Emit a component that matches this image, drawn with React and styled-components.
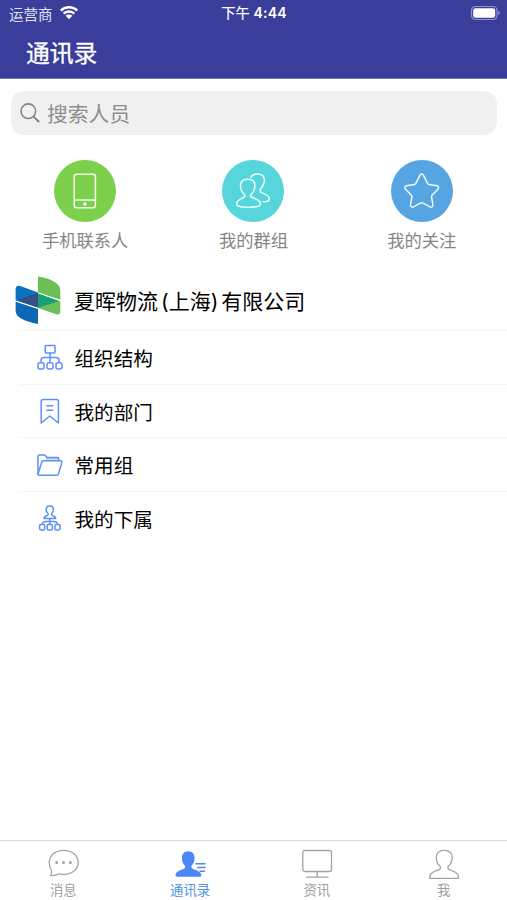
import styled, { createGlobalStyle } from 'styled-components';

const GlobalStyle = createGlobalStyle`
    * {
        box-sizing: border-box;
    }
    body {
        margin: 0;
        background: #fff;
        font-family: "Inter", "Noto Sans CJK SC", sans-serif;
    }
`;

const WifiIcon = () => (
    <svg width="20" height="16" viewBox="0 0 20 16" fill="#fff">
        <path d="M10 1C6.400 1 3.200 2.400.9 4.700l1.700 1.800A10.500 10.500 0 0 1 10 3.500c2.900 0 5.500 1.100 7.400 3l1.700-1.800A13 13 0 0 0 10 1z" />
        <path d="M10 5.200c-2.400 0-4.600.9-6.200 2.500l1.700 1.800A6.400 6.400 0 0 1 10 7.700c1.800 0 3.300.7 4.500 1.800l1.700-1.800A8.800 8.800 0 0 0 10 5.200z" />
        <path d="M10 9.400c-1.300 0-2.500.5-3.400 1.300L10 14.300l3.400-3.600A5 5 0 0 0 10 9.400z" />
    </svg>
);

const BatteryIcon = () => (
    <svg width="31" height="16" viewBox="0 0 31 16">
        <rect x="1.500" y="1.500" width="25.500" height="13" rx="4" fill="none" stroke="#8f92cf" strokeWidth="1.200" />
        <rect x="3.200" y="3.200" width="22" height="9.600" rx="2.300" fill="#fff" />
        <path d="M28.400 5.800c1.800.6 1.800 3.800 0 4.400z" fill="#8f92cf" />
    </svg>
);

const SearchIcon = () => (
    <svg width="20" height="20" viewBox="0 0 20 20" fill="none" stroke="#858585" strokeLinecap="round">
        <circle cx="8.300" cy="8.200" r="7.300" strokeWidth="1.600" />
        <path d="M13.600 13.600l5 4.900" strokeWidth="2" />
    </svg>
);

const PhoneIcon = () => (
    <svg width="62" height="62" viewBox="0 0 62 62" fill="none" stroke="#f4ffe9" strokeWidth="1.500">
        <rect x="20.200" y="14.200" width="21.200" height="33.600" rx="2.500" />
        <path d="M20.200 40h21.200" />
        <circle cx="30.900" cy="44" r="1.700" fill="#fff" stroke="none" />
    </svg>
);

const GroupIcon = () => (
    <svg width="62" height="62" viewBox="0 0 62 62" fill="none" stroke="#e9ffff" strokeWidth="1.500" strokeLinejoin="round" strokeLinecap="round">
        <path d="M22.400 34.500c-2.600-2.500-3.900-5.300-3.900-8.800 0-4.200 2.900-6.500 7.200-6.500s7.200 2.300 7.200 6.500c0 3.500-1.300 6.300-3.900 8.800-1 1.300-.5 2.300 1.200 3 4.900 1.700 8.400 3.200 8.400 6.500 0 1.700-3.500 3.300-12.600 3.300S14.500 45.700 14.500 44c0-3.300 3.400-4.800 6.700-6.500 1.700-.7 2.200-1.700 1.200-3z" />
        <path d="M28.800 17.300c1.300-2.200 3.600-3.300 6.500-3.300 4.400 0 7.100 2.400 7.100 6.300 0 3.700-1.500 6-3.700 8.700-1.200 1.700-.6 3 1.400 3.900 4.500 1.700 7.300 3.300 7.300 6 0 1.900-2 2.900-6.400 2.900" />
    </svg>
);

const StarIcon = () => (
    <svg width="62" height="62" viewBox="0 0 62 62" fill="none" stroke="#f2faff" strokeWidth="1.500" strokeLinejoin="round">
        <path d="M28.900 15.300c.8-1.600 2.800-1.600 3.600 0l4.200 8.300c.3.500.7.800 1.300.9l7.700 1.200c1.800.3 2.400 2.200 1.200 3.500l-5.900 6c-.4.500-.6 1-.5 1.600l1.400 7.900c.3 1.800-1.300 3-2.900 2.200l-7.500-4c-.5-.3-1.100-.3-1.600 0l-7.500 4c-1.600.8-3.200-.4-2.900-2.200l1.400-7.900c.1-.6-.1-1.100-.5-1.600l-5.900-6c-1.200-1.300-.6-3.200 1.200-3.500l7.700-1.200c.6-.1 1-.4 1.300-.9z" />
    </svg>
);

const CompanyLogo = () => (
    <svg width="46" height="50" viewBox="0 0 46 50">
        <path d="M23 1.500C34 3.200 45.300 7.800 45.300 15v9.800L23 17.200z" fill="#6abf58" />
        <path d="M23 18.600l22.300 7.800v9.800c0 2.800-2 3.800-4.800 2.900L23 33z" fill="#6abf58" />
        <path d="M.6 14.500c0-3.200 1.800-4.300 4.700-3.400L23 17.500v14.900L.6 25.200z" fill="#0b72bd" />
        <path d="M.6 26.800L23 34v15C10 46.200.6 43 .6 35.500z" fill="#0b68b4" />
        <path d="M1.500 25.400L23 18v14.400z" fill="#354f84" />
        <path d="M23 18.600l21 7.500L23 33z" fill="#199f77" />
    </svg>
);

const OrgIcon = () => (
    <LineIcon>
        <rect x="8.200" y="1.500" width="9.800" height="7.500" rx="1" />
        <path d="M13 9v9.300M4 19v-2.500c0-2 1.300-3 3-3h12c1.800 0 3.100 1 3.100 3V19" />
        <rect x="1" y="18.700" width="6" height="6.300" rx="2" />
        <rect x="10" y="18.700" width="6" height="6.300" rx="2" />
        <rect x="19" y="18.700" width="6" height="6.300" rx="2" />
    </LineIcon>
);

const BookmarkIcon = () => (
    <LineIcon>
        <path d="M4.200 25V3.500c0-1.200.8-2 2-2h13.200c1.200 0 2 .8 2 2V25l-8.600-7z" />
        <path d="M9.300 7.800h7M9.300 12.200h7" />
    </LineIcon>
);

const FolderIcon = () => (
    <LineIcon>
        <path d="M1 22V4.500C1 3.600 1.500 3 2.500 3h5.200l2.200 2.500h10.200c1 0 1.700.7 1.700 1.700V9" />
        <path d="M1 22L4.800 10c.3-.9.800-1.200 1.600-1.200h17.300c1 0 1.400.7 1.200 1.600L21.500 21.800c-.2.900-.8 1.400-1.700 1.400H2.200c-.9 0-1.400-.5-1.200-1.200z" />
        <path d="M9 6.700h12.300" strokeWidth="2" opacity=".45" />
    </LineIcon>
);

const SubordinateIcon = () => (
    <LineIcon>
        <path d="M11 8.500C9.500 7.300 9.200 6.200 9.200 4.700c0-2.400 1.300-3.700 3.600-3.700s3.600 1.300 3.600 3.700c0 1.500-.3 2.600-1.800 3.800-.5 1.300.2 2 1.500 2.500 1.600.5 2.600 1.200 2.600 2.600H6.900c0-1.400 1-2.100 2.600-2.600 1.300-.5 2-1.200 1.500-2.500z" />
        <path d="M12.800 13.600v5.800M5 19.600c.2-2 1.700-3.100 4.200-3.100h7.400c2.300 0 3.800 1.100 4 3.100" />
        <rect x="2.600" y="19.600" width="5.200" height="5.400" rx="1.500" />
        <rect x="10.200" y="19.600" width="5.200" height="5.400" rx="1.500" />
        <rect x="17.900" y="19.600" width="5.200" height="5.400" rx="1.500" />
    </LineIcon>
);

const MessageIcon = () => (
    <TabSvg>
        <path d="M3.700 27.700c.9-1.700 1.200-3.300.9-5C2.900 20.300 2.200 17.800 2.200 14.800 2.200 7.500 8.500 2.300 16.700 2.300S31.200 7.500 31.200 14.500 24.900 26.400 16.700 26.400c-1.600 0-3-.2-4.400-.6-2.600 1.400-5.300 2-8.600 1.900z" />
        <g fill="#a3a3a3" stroke="none">
            <circle cx="9.700" cy="14.500" r="1.500" />
            <circle cx="16.500" cy="14.500" r="1.500" />
            <circle cx="23.300" cy="14.500" r="1.500" />
        </g>
    </TabSvg>
);

const ContactsIcon = () => (
    <TabSvg $active>
        <path d="M14.200 3.200c-4 0-6.200 2.800-6.200 6.700 0 3.200.9 5.900 3.200 8.100.3 1.600-.6 2.500-2.400 3.200-4 1.400-6.700 2.700-7.200 5.300-.2 1.500.5 2.200 1.800 2.200h22.300c1.300 0 1.900-.9 1.500-2.200-.7-2.600-3.600-3.900-7.400-5.300-1.800-.7-2.700-1.600-2.400-3.200 2.200-2.200 3.200-4.900 3.200-8.100 0-3.900-2.300-6.700-6.400-6.700z" />
        <path d="M21.300 15h10.200v1.500H21.300zM23.300 18.800h8.200v1.500h-8.200zM25.500 22.600H31v1.500h-5.500z" />
    </TabSvg>
);

const NewsIcon = () => (
    <TabSvg>
        <rect x="1.800" y="2.500" width="28.700" height="21" rx="2" />
        <path d="M16.200 23.500v5.500M5 29.200h22.500" />
    </TabSvg>
);

const MeIcon = () => (
    <TabSvg>
        <path d="M12.300 18.500C9 15.900 8.200 14 8.200 9.500c0-4.600 2.800-7.200 8-7.200s8 2.600 8 7.200c0 4.500-.8 6.400-4.100 9-.6 2 .3 3 2.400 3.600 5 1.500 8 3.300 8 7v1.200H1.700v-1.200c0-3.700 3.200-5.500 8.200-7 2.100-.6 3-1.600 2.400-3.600z" />
    </TabSvg>
);

const shortcuts = [
    { label: '手机联系人', color: '#7dd04c', icon: <PhoneIcon /> },
    { label: '我的群组', color: '#56d6da', icon: <GroupIcon /> },
    { label: '我的关注', color: '#56a5e2', icon: <StarIcon /> },
];

const menu = [
    { label: '组织结构', icon: <OrgIcon /> },
    { label: '我的部门', icon: <BookmarkIcon /> },
    { label: '常用组', icon: <FolderIcon /> },
    { label: '我的下属', icon: <SubordinateIcon /> },
];

const tabs = [
    { label: '消息', icon: <MessageIcon /> },
    { label: '通讯录', icon: <ContactsIcon />, active: true },
    { label: '资讯', icon: <NewsIcon /> },
    { label: '我', icon: <MeIcon /> },
];

function App() {
    return (
        <Screen>
            <GlobalStyle />
            <Header>
                <StatusBar>
                    <Carrier>运营商 <WifiIcon /></Carrier>
                    <Clock>下午 <Time>4:44</Time></Clock>
                    <Battery><BatteryIcon /></Battery>
                </StatusBar>
                <Title>通讯录</Title>
            </Header>

            <Search>
                <SearchIcon />
                <SearchText>搜索人员</SearchText>
            </Search>

            <Shortcuts>
                {shortcuts.map((item) => (
                    <Shortcut key={item.label}>
                        <Circle $color={item.color}>{item.icon}</Circle>
                        <ShortcutLabel>{item.label}</ShortcutLabel>
                    </Shortcut>
                ))}
            </Shortcuts>

            <Company>
                <CompanyLogo />
                <CompanyName>夏晖物流<Bracket>(上海)</Bracket>有限公司</CompanyName>
            </Company>

            <Menu>
                {menu.map((item) => (
                    <MenuRow key={item.label}>
                        {item.icon}
                        <MenuLabel>{item.label}</MenuLabel>
                    </MenuRow>
                ))}
            </Menu>

            <TabBar>
                {tabs.map((tab) => (
                    <Tab key={tab.label}>
                        {tab.icon}
                        <TabLabel $active={tab.active}>{tab.label}</TabLabel>
                    </Tab>
                ))}
            </TabBar>
        </Screen>
    )
}

export default App

const Screen = styled.div`
    display: flex;
    flex-direction: column;
    width: 100%;
    height: 100vh;
    background: #fff;
    overflow: hidden;
    white-space: nowrap;
`;

const Header = styled.header`
    height: 79px;
    flex: none;
    background: #3a3d9a;
    color: #fff;
    border-bottom: 1px solid #6f76c4;
`;

const StatusBar = styled.div`
    display: grid;
    grid-template-columns: 1fr auto 1fr;
    align-items: center;
    height: 26px;
    padding: 0 6px 0 9px;
    font-size: 14.500px;
`;

const Carrier = styled.div`
    display: flex;
    align-items: center;
    gap: 6px;
    color: #dfe0f5;
`;

const Clock = styled.div`
    margin-right: 2px;
    font-size: 14.200px;
    line-height: 20px;
    padding-bottom: 1px;
    -webkit-text-stroke: 0.2px #fff;
`;

const Time = styled.span`
    font-size: 14px;
    font-weight: 600;
    letter-spacing: 0.2px;
    -webkit-text-stroke: 0;
`;

const Battery = styled.div`
    display: flex;
    justify-content: flex-end;
`;

const Title = styled.h1`
    margin: 0;
    padding-left: 26px;
    font-size: 23.800px;
    font-weight: 400;
    line-height: 55px;
    -webkit-text-stroke: 0.3px #fff;
`;

const Search = styled.div`
    display: flex;
    flex: none;
    align-items: center;
    gap: 7px;
    height: 44px;
    margin: 12px 10px 0 11px;
    padding-left: 9px;
    border-radius: 13px;
    background: #f0f0f0;
`;

const SearchText = styled.span`
    font-size: 20.800px;
    line-height: 44px;
    padding-top: 3px;
    color: #8e8e8e;
`;

const Shortcuts = styled.div`
    display: grid;
    grid-template-columns: repeat(3, 1fr);
    flex: none;
    height: 135px;
    padding: 25px 1px 0;
`;

const Shortcut = styled.div`
    display: flex;
    flex-direction: column;
    align-items: center;
`;

const Circle = styled.div`
    width: 62px;
    height: 62px;
    border-radius: 50%;
    background: ${(props) => props.$color};
`;

const ShortcutLabel = styled.span`
    margin-top: 7px;
    font-size: 17.300px;
    line-height: 24px;
    color: #858585;
`;

const Company = styled.div`
    display: flex;
    flex: none;
    align-items: center;
    gap: 13px;
    height: 60px;
    padding-left: 15px;
`;

const CompanyName = styled.span`
    padding-bottom: 1px;
    font-size: 21px;
    color: #000;
`;

const Bracket = styled.span`
    margin: 0 3px;
`;

const Menu = styled.div`
    flex: 1;
    margin-left: 20px;
`;

const MenuRow = styled.div`
    display: flex;
    align-items: center;
    gap: 11.500px;
    height: 53.700px;
    padding-left: 17px;
    border-top: 1px solid #f5f5f5;
`;

const MenuLabel = styled.span`
    font-size: 19.600px;
    color: #000;
`;

const LineIcon = styled.svg.attrs({ viewBox: '0 0 26 26' })`
    width: 26px;
    height: 26px;
    fill: none;
    stroke: #5f8ff8;
    stroke-width: 1.5;
    stroke-linejoin: round;
`;

const TabBar = styled.nav`
    display: grid;
    grid-template-columns: repeat(4, 1fr);
    flex: none;
    height: 60px;
    border-top: 1px solid #d8d8d8;
    background: #fff;
`;

const Tab = styled.div`
    display: flex;
    flex-direction: column;
    align-items: center;
    padding-top: 7px;
`;

const TabSvg = styled.svg.attrs({ viewBox: '0 0 32 32' })`
    width: 32px;
    height: 32px;
    fill: ${(props) => (props.$active ? '#4a88fa' : 'none')};
    stroke: ${(props) => (props.$active ? 'none' : '#a3a3a3')};
    stroke-width: 1.3;
    stroke-linejoin: round;
`;

const TabLabel = styled.span`
    margin-top: 1px;
    font-size: 13.400px;
    line-height: 19px;
    color: ${(props) => (props.$active ? '#5494e4' : '#a0a0a0')};
`;
